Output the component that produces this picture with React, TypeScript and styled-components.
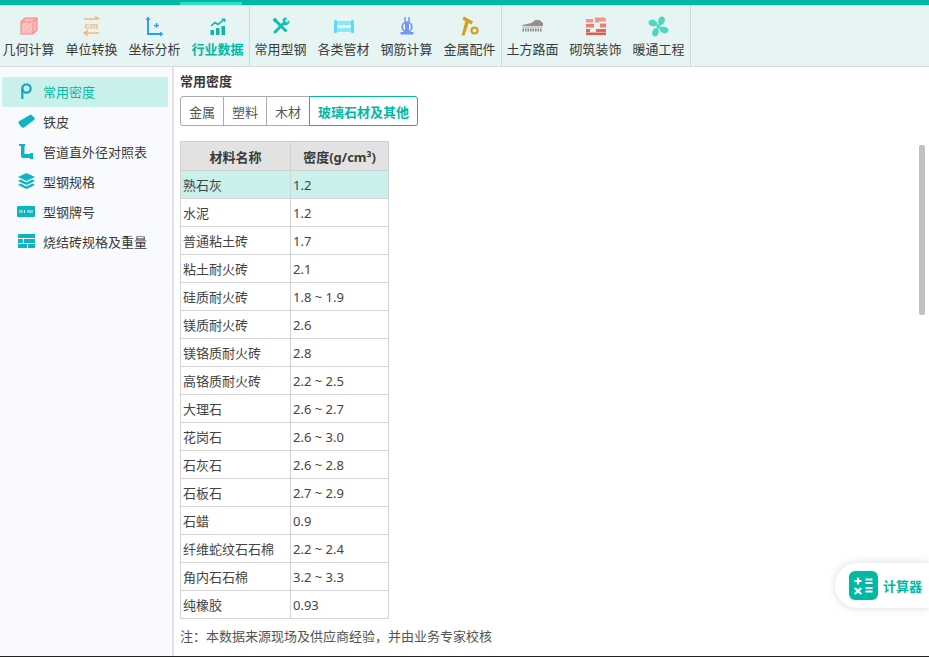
import React from 'react';
import styled, { createGlobalStyle } from 'styled-components';

const GlobalStyle = createGlobalStyle`
  html, body {
    margin: 0;
    padding: 0;
    height: 100%;
    overflow: hidden;
    background: #fff;
  }
  body {
    font-family: "Noto Sans", "Noto Sans CJK SC", sans-serif;
    font-size: 13px;
    color: #333;
  }
`;

type ToolItem = { label: string; icon: React.ReactNode; active?: boolean };

const CubeIcon = () => (
  <svg width="18" height="18" viewBox="0 0 18 18">
    <path d="M1 5l4-4h12v12l-4 4H1z" fill="#ffb9b9" stroke="#f58a8a" strokeWidth="1.2" />
    <path d="M1 5h12v12M13 5l4-4" fill="none" stroke="#f58a8a" strokeWidth="1.2" />
    <path d="M2 10l5-5M2 16l11-11M7 16l6-6" stroke="#fbd0d0" strokeWidth="1" />
  </svg>
);
const UnitIcon = () => (
  <svg width="17" height="20" viewBox="0 0 17 20">
    <path d="M1 3h15M12 0.500l4 2.500" fill="none" stroke="#f6b77f" strokeWidth="1.600" />
    <path d="M16 17H1M5 14.500l-4 2.500 4 2.500" fill="none" stroke="#f6b77f" strokeWidth="1.600" />
    <text x="8.500" y="13" textAnchor="middle" fontSize="9.500" fontWeight="700" fill="#f6b77f" fontFamily="Liberation Sans">cm</text>
  </svg>
);
const AxisIcon = () => (
  <svg width="19" height="21" viewBox="0 0 19 21">
    <path d="M3 3v15h14" fill="none" stroke="#2a9df4" strokeWidth="2" />
    <path d="M0.500 4L3 0.500 5.500 4zM15 15.500l3.500 2.500-3.500 2.500z" fill="#2a9df4" />
    <path d="M11.500 7v5M9 9.500h5" stroke="#2a9df4" strokeWidth="1.300" />
  </svg>
);
const ChartIcon = () => (
  <svg width="16" height="17" viewBox="0 0 16 17">
    <path d="M1 8l4-3.500 3 2 6-5" fill="none" stroke="#0db5a5" strokeWidth="1.600" />
    <path d="M11 0.500h4.500v4z" fill="#0db5a5" />
    <path d="M0.500 12h3.500v5H0.500zM6 10h3.500v7H6zM11.500 8H15v9h-3.500z" fill="#0db5a5" />
  </svg>
);
const ToolsIcon = () => (
  <svg width="18" height="18" viewBox="0 0 18 18">
    <path d="M3 15L12.500 5.500" stroke="#15bfae" strokeWidth="3" strokeLinecap="round" />
    <path d="M10.500 2.500a4 4 0 0 1 5-1.500l-2.500 2.500.6 1.400 1.500.6L17.200 3a4 4 0 0 1-5.200 5z" fill="#15bfae" />
    <path d="M3 3l11.500 11.500" stroke="#15bfae" strokeWidth="3" />
    <path d="M0.500 3L3 0.500 5.500 3 3 5.500z" fill="#15bfae" />
  </svg>
);
const PipeIcon = () => (
  <svg width="20" height="13" viewBox="0 0 20 13">
    <rect x="2" y="5" width="16" height="3" fill="#e3f9fc" />
    <rect x="0" y="0" width="3" height="13" rx="1" fill="#5fd8f5" />
    <rect x="17" y="0" width="3" height="13" rx="1" fill="#5fd8f5" />
    <rect x="3" y="1" width="14" height="4" fill="#8ae6f8" />
    <rect x="3" y="8" width="14" height="4" fill="#8ae6f8" />
  </svg>
);
const RebarIcon = () => (
  <svg width="14" height="18" viewBox="0 0 14 18">
    <path d="M5 0v5M9 0v5" stroke="#7396f5" strokeWidth="1.500" />
    <ellipse cx="7" cy="10" rx="4.800" ry="4.800" fill="none" stroke="#7396f5" strokeWidth="1.800" />
    <rect x="5" y="5" width="4" height="10" fill="#7396f5" />
    <rect x="0.500" y="15" width="13" height="2.500" fill="#7396f5" />
  </svg>
);
const HammerIcon = () => (
  <svg width="18" height="20" viewBox="0 0 18 20">
    <path d="M3 0.500l9 5-1.500 3-9-5z" fill="#d4a017" />
    <path d="M5 3l3.500 1.500L3.500 19.500H0.500z" fill="#d4a017" />
    <circle cx="13.500" cy="14.500" r="3" fill="none" stroke="#d4a017" strokeWidth="2.200" />
  </svg>
);
const RoadIcon = () => (
  <svg width="21" height="12" viewBox="0 0 21 12">
    <path d="M0.500 5l9-2 4-3h4l3.500 3v3H0.500z" fill="#9d8a8a" />
    <rect x="0.500" y="6.500" width="20" height="1.500" fill="#d2c8c8" />
    <path d="M0.500 10h20" stroke="#8d8585" strokeWidth="3" strokeDasharray="1.500 1" />
  </svg>
);
const WallIcon = () => (
  <svg width="20" height="18" viewBox="0 0 20 18">
    <path d="M9 0.500h9c1 0 2 1 2 2v2h-7v1H9zM0 2h7v3.500H0z" fill="#f2958a" />
    <path d="M0 7h8v3.500H0zM14 6.500h6v4h-6z" fill="#ee7f75" />
    <path d="M0 12h4v3H0zM10 12h10v3H10z" fill="#e8655d" />
    <path d="M0 15.500h20V18H0z" fill="#e25a52" />
  </svg>
);
const FanIcon = () => (
  <svg width="21" height="21" viewBox="0 0 21 21">
    <path d="M9.500 9.500C5 11 .5 10 .5 6.500c0-2.500 3.500-3.500 5.500-2.500 2.500 1 4 3 3.500 5.500z" fill="#4fd6bc" />
    <path d="M11 9C9.500 5 10.500.5 14 .5c2.500 0 3.500 3.500 2.500 5.500-1 2.500-3 3.500-5.500 3z" fill="#4fd6bc" />
    <path d="M11.500 11.500c4.500-1.500 9-.500 9 3 0 2.500-3.500 3.500-5.500 2.500-2.500-1-4-3-3.500-5.500z" fill="#4fd6bc" />
    <path d="M10 12c1.500 4 .5 8.500-3 8.500-2.500 0-3.500-3.500-2.500-5.500 1-2.500 3-3.500 5.500-3z" fill="#4fd6bc" />
    <circle cx="10.500" cy="10.500" r="2" fill="#4fd6bc" />
  </svg>
);

const toolGroups: ToolItem[][] = [
  [
    { label: '几何计算', icon: <CubeIcon /> },
    { label: '单位转换', icon: <UnitIcon /> },
    { label: '坐标分析', icon: <AxisIcon /> },
    { label: '行业数据', icon: <ChartIcon />, active: true },
  ],
  [
    { label: '常用型钢', icon: <ToolsIcon /> },
    { label: '各类管材', icon: <PipeIcon /> },
    { label: '钢筋计算', icon: <RebarIcon /> },
    { label: '金属配件', icon: <HammerIcon /> },
  ],
  [
    { label: '土方路面', icon: <RoadIcon /> },
    { label: '砌筑装饰', icon: <WallIcon /> },
    { label: '暖通工程', icon: <FanIcon /> },
  ],
];

const sideC = '#0bb5c4';
const sideItems: { label: string; icon: React.ReactNode; active?: boolean }[] = [
  {
    label: '常用密度',
    active: true,
    icon: (
      <svg width="12" height="16" viewBox="0 0 12 16">
        <circle cx="6.500" cy="5.500" r="4.200" fill="none" stroke="#0fa5c8" strokeWidth="2.200" />
        <path d="M2.300 5.500V16" stroke="#0fa5c8" strokeWidth="2.200" />
      </svg>
    ),
  },
  {
    label: '铁皮',
    icon: (
      <svg width="17" height="15" viewBox="0 0 17 15">
        <path d="M0.500 7.500L12 1c.5-.3 1-.2 1.400.1l3.100 2.400c.6 1 .2 1.900-.6 2.400L6 13.500c-1 .6-2 .3-2.600-.4L.5 9z" fill={sideC} />
      </svg>
    ),
  },
  {
    label: '管道直外径对照表',
    icon: (
      <svg width="14" height="15" viewBox="0 0 14 15">
        <path d="M0 0h6v2H5.500v8H11V9h3v6h-3v-1H4a2 2 0 0 1-2-2V2H0z" fill={sideC} />
      </svg>
    ),
  },
  {
    label: '型钢规格',
    icon: (
      <svg width="17" height="16" viewBox="0 0 17 16">
        <path d="M8.500 0L17 4l-8.500 4L0 4z" fill={sideC} />
        <path d="M0 8l2.500-1.500 6 3 6-3L17 8l-8.500 4z" fill={sideC} />
        <path d="M0 12l2.500-1.500 6 3 6-3L17 12l-8.500 4z" fill={sideC} />
      </svg>
    ),
  },
  {
    label: '型钢牌号',
    icon: (
      <svg width="18" height="11" viewBox="0 0 18 11">
        <rect width="18" height="11" rx="1" fill={sideC} />
        <path d="M3 4v3M5 4v3M7.500 4v3M11 4v3M13 4v3M15 4v3" stroke="#dff6f6" strokeWidth="1" />
      </svg>
    ),
  },
  {
    label: '烧结砖规格及重量',
    icon: (
      <svg width="17" height="14" viewBox="0 0 17 14">
        <path d="M0 0h17v4H0zM0 5h5v4H0zM6 5h11v4H6zM0 10h9v4H0zM10 10h7v4h-7z" fill={sideC} />
      </svg>
    ),
  },
];

const tabs = ['金属', '塑料', '木材', '玻璃石材及其他'];

const rows: [string, string][] = [
  ['熟石灰', '1.2'],
  ['水泥', '1.2'],
  ['普通粘土砖', '1.7'],
  ['粘土耐火砖', '2.1'],
  ['硅质耐火砖', '1.8 ~ 1.9'],
  ['镁质耐火砖', '2.6'],
  ['镁铬质耐火砖', '2.8'],
  ['高铬质耐火砖', '2.2 ~ 2.5'],
  ['大理石', '2.6 ~ 2.7'],
  ['花岗石', '2.6 ~ 3.0'],
  ['石灰石', '2.6 ~ 2.8'],
  ['石板石', '2.7 ~ 2.9'],
  ['石蜡', '0.9'],
  ['纤维蛇纹石石棉', '2.2 ~ 2.4'],
  ['角内石石棉', '3.2 ~ 3.3'],
  ['纯橡胶', '0.93'],
];

export default function App() {
  return (
    <Page>
      <GlobalStyle />
      <Toolbar>
        {toolGroups.map((group, i) => (
          <ToolGroup key={i}>
            {group.map((item) => (
              <ToolButton key={item.label} $active={item.active}>
                {item.active && <ActiveBar />}
                <ToolIcon>{item.icon}</ToolIcon>
                <span>{item.label}</span>
              </ToolButton>
            ))}
          </ToolGroup>
        ))}
      </Toolbar>
      <Body>
        <Sidebar>
          {sideItems.map((item) => (
            <SideRow key={item.label} $active={item.active}>
              <SideIcon>{item.icon}</SideIcon>
              <span>{item.label}</span>
            </SideRow>
          ))}
        </Sidebar>
        <Content>
          <Title>常用密度</Title>
          <Tabs>
            {tabs.map((tab, i) => (
              <Tab key={tab} $active={i === tabs.length - 1}>
                {tab}
              </Tab>
            ))}
          </Tabs>
          <DensityTable>
            <thead>
              <tr>
                <HeadCell>材料名称</HeadCell>
                <HeadCell>密度(g/cm³)</HeadCell>
              </tr>
            </thead>
            <tbody>
              {rows.map(([name, value], i) => (
                <tr key={name}>
                  <Cell $selected={i === 0}>{name}</Cell>
                  <Cell $selected={i === 0}>{value}</Cell>
                </tr>
              ))}
            </tbody>
          </DensityTable>
          <Note>注：本数据来源现场及供应商经验，并由业务专家校核</Note>
          <ScrollThumb />
        </Content>
      </Body>
      <CalcButton>
        <CalcIcon>
          <svg width="29" height="29" viewBox="0 0 29 29">
            <rect width="29" height="29" rx="6" fill="#00b9a4" />
            <path d="M5.500 10h7M9 6.500v7M5.800 17l6.400 6M12.200 17l-6.400 6" stroke="#fff" strokeWidth="2.200" />
            <path d="M16.500 8.500h7M16.500 12h7M16.500 17h7M16.500 20.500h7" stroke="#fff" strokeWidth="2" />
          </svg>
        </CalcIcon>
        <CalcLabel>计算器</CalcLabel>
      </CalcButton>
    </Page>
  );
}

const Page = styled.div`
  position: relative;
  width: 929px;
  height: 657px;
  display: flex;
  flex-direction: column;
  overflow: hidden;
  background: #fff;
  border-bottom: 1px solid #222;
  box-sizing: border-box;
`;

const Toolbar = styled.header`
  height: 67px;
  flex: none;
  display: flex;
  box-sizing: border-box;
  border-top: 5px solid #00b9a4;
  border-bottom: 1px solid #d9d9d9;
  background: #e6f5f4;
`;

const ToolGroup = styled.div`
  display: flex;
  margin-right: -1px;
  border-right: 1px solid #cfd8d8;
  &:first-child { margin-left: -3px; }
`;

const ToolButton = styled.div<{ $active?: boolean }>`
  position: relative;
  width: 63px;
  display: flex;
  flex-direction: column;
  align-items: center;
  padding-top: 8px;
  box-sizing: border-box;
  font-size: 13px;
  line-height: 18px;
  white-space: nowrap;
  color: ${({ $active }) => ($active ? '#00b9a4' : '#3a3a3a')};
  font-weight: ${({ $active }) => ($active ? 700 : 400)};
`;

const ActiveBar = styled.div`
  position: absolute;
  top: -3px;
  left: -6px;
  width: 62px;
  height: 3px;
  background: #2fe0c8;
`;

const ToolIcon = styled.div`
  height: 26px;
  display: flex;
  align-items: center;
  justify-content: center;
  margin-bottom: 1px;
`;

const Body = styled.div`
  flex: 1;
  min-height: 0;
  display: flex;
`;

const Sidebar = styled.aside`
  width: 174px;
  flex: none;
  box-sizing: border-box;
  padding: 10px 4px 0 2px;
  background: #f8fafd;
  border-right: 2px solid #e2e2e2;
`;

const SideRow = styled.div<{ $active?: boolean }>`
  height: 30px;
  display: flex;
  align-items: center;
  padding: 0 0 2px 15px;
  box-sizing: border-box;
  gap: 8px;
  font-size: 13px;
  border-radius: 2px;
  color: ${({ $active }) => ($active ? '#00b9a4' : '#3a3a3a')};
  background: ${({ $active }) => ($active ? '#c9f0ea' : 'transparent')};
`;

const SideIcon = styled.div`
  width: 18px;
  display: flex;
  justify-content: center;
`;

const Content = styled.main`
  position: relative;
  flex: 1;
  min-width: 0;
  padding: 5px 0 0 6px;
`;

const Title = styled.div`
  font-size: 13px;
  font-weight: 700;
  line-height: 18px;
  color: #3a3a3a;
`;

const Tabs = styled.div`
  display: flex;
  margin-top: 6px;
  height: 30px;
`;

const Tab = styled.div<{ $active?: boolean }>`
  display: flex;
  align-items: center;
  padding: 0 8px;
  box-sizing: border-box;
  font-size: 13px;
  background: #fff;
  margin-left: -1px;
  border: 1px solid ${({ $active }) => ($active ? '#00b9a4' : '#aaa')};
  color: ${({ $active }) => ($active ? '#00b9a4' : '#555')};
  font-weight: ${({ $active }) => ($active ? 700 : 400)};
  position: relative;
  z-index: ${({ $active }) => ($active ? 1 : 0)};
  &:first-child {
    margin-left: 0;
    border-radius: 3px 0 0 3px;
  }
  &:last-child {
    border-radius: 0 3px 3px 0;
  }
`;

const DensityTable = styled.table`
  margin-top: 15px;
  border-collapse: collapse;
  table-layout: fixed;
  width: 209px;
  font-size: 13px;
  border: 1px solid #d4d4d4;
`;

const HeadCell = styled.th`
  height: 28px;
  padding: 0;
  background: #e2e2e2;
  border: 1px solid #d0d0d0;
  font-size: 13px;
  font-weight: 700;
  color: #3a3a3a;
  &:first-child { width: 109px; }
`;

const Cell = styled.td<{ $selected?: boolean }>`
  height: 27px;
  line-height: 18px;
  padding: 0 0 0 2px;
  border: 1px solid #d4d4d4;
  color: #444;
  background: ${({ $selected }) => ($selected ? '#c9f0ea' : '#fff')};
`;

const Note = styled.div`
  margin-top: 8px;
  font-size: 13px;
  line-height: 18px;
  color: #555;
`;

const ScrollThumb = styled.div`
  position: absolute;
  top: 78px;
  right: 4px;
  width: 6px;
  height: 170px;
  border-radius: 2px;
  background: #c1c1c1;
`;

const CalcButton = styled.div`
  position: absolute;
  right: 0;
  top: 563px;
  width: 94px;
  height: 45px;
  display: flex;
  align-items: center;
  gap: 5px;
  padding-left: 14px;
  box-sizing: border-box;
  border-radius: 23px 0 0 23px;
  background: #fff;
  box-shadow: 0 0 8px rgba(0, 0, 0, 0.15);
  font-size: 13px;
  font-weight: 700;
  color: #00b9a4;
  white-space: nowrap;
`;

const CalcLabel = styled.span`
  padding-bottom: 1px;
`;

const CalcIcon = styled.div`
  display: flex;
`;
